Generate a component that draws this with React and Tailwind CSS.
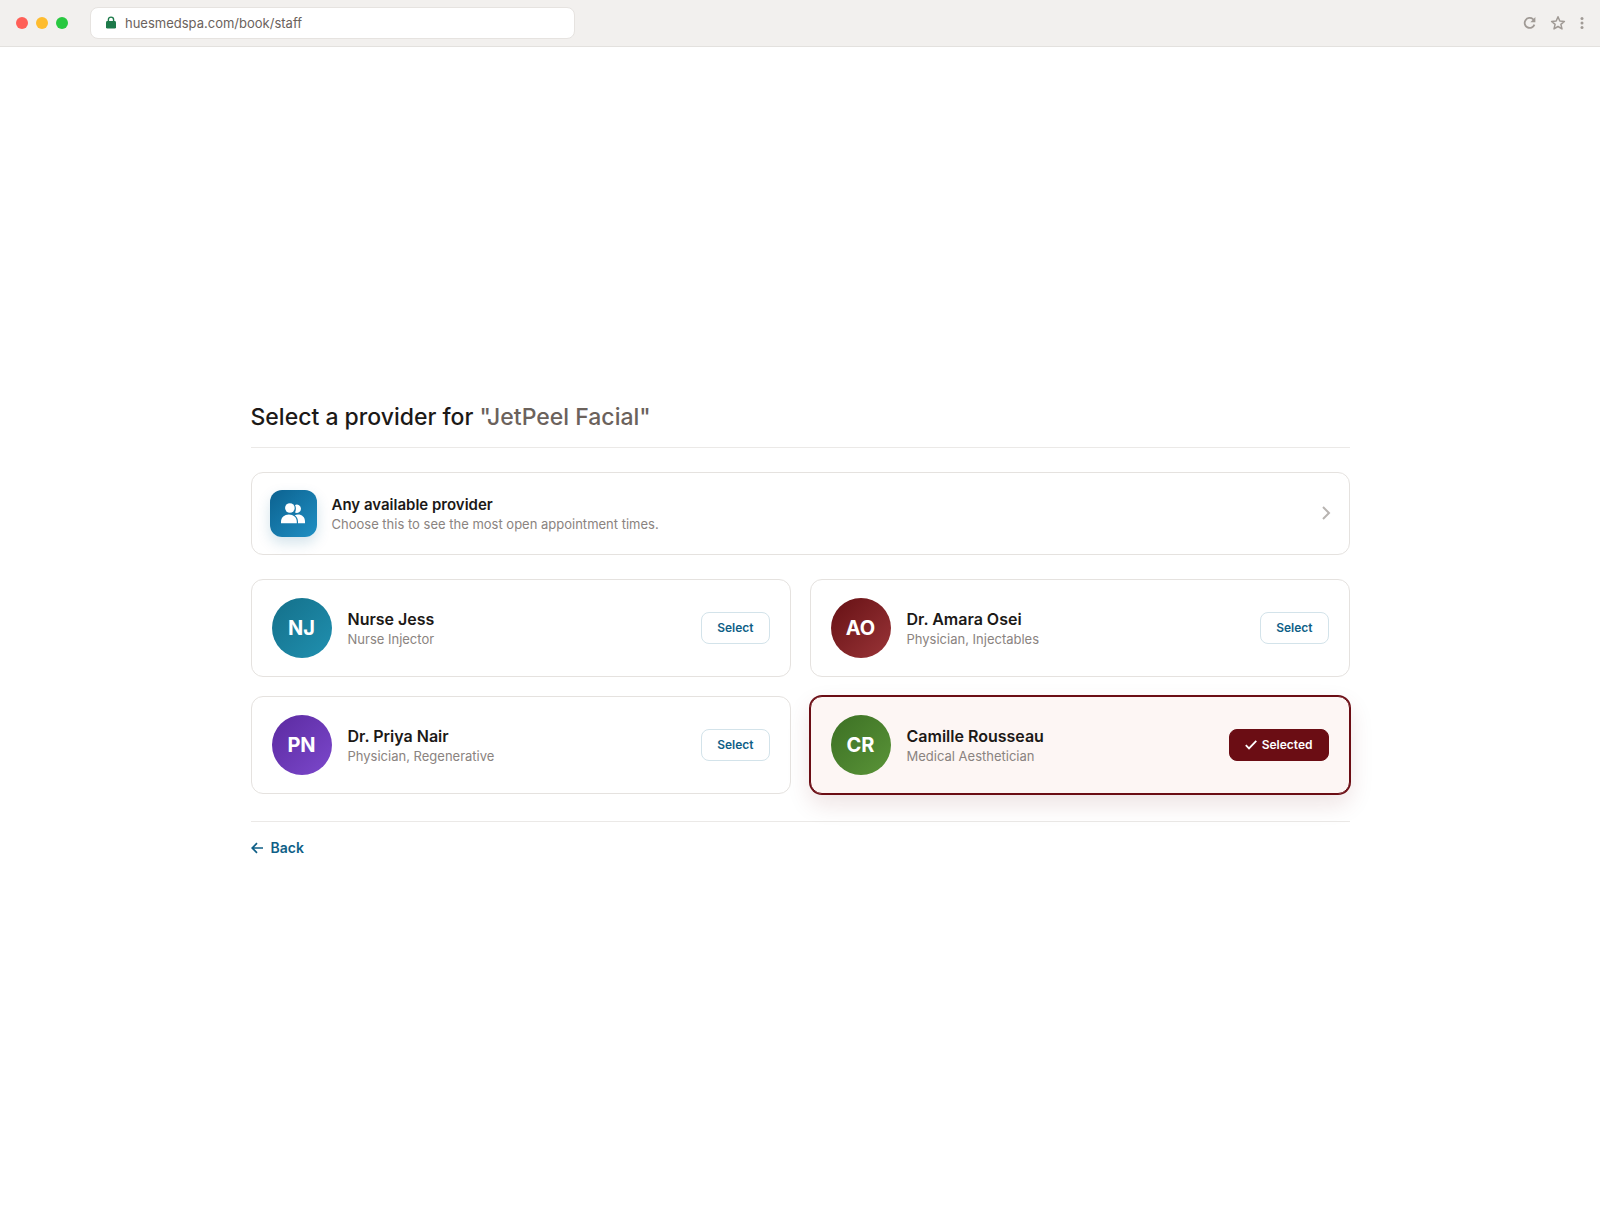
import { useState } from "react";

const providers = [
  { id: "nj", initials: "NJ", name: "Nurse Jess", role: "Nurse Injector", avatar: "from-[#14708a] to-[#2090b0]" },
  { id: "ao", initials: "AO", name: "Dr. Amara Osei", role: "Physician, Injectables", avatar: "from-[#661014] to-[#9a3438]" },
  { id: "pn", initials: "PN", name: "Dr. Priya Nair", role: "Physician, Regenerative", avatar: "from-[#5b2aa0] to-[#7c48cc]" },
  { id: "cr", initials: "CR", name: "Camille Rousseau", role: "Medical Aesthetician", avatar: "from-[#3c7024] to-[#5a9438]" },
];

const BrowserBar = () => (
  <header className="flex h-[47px] items-center justify-between border-b border-[#e3e1de] bg-[#f2f0ee] px-4">
    <div className="flex flex-1 items-center">
      <div className="flex gap-2">
        <span className="size-3 rounded-full bg-[#ff5f57]" />
        <span className="size-3 rounded-full bg-[#febc2e]" />
        <span className="size-3 rounded-full bg-[#28c840]" />
      </div>
      <label className="ml-[22px] flex h-8 w-full max-w-[485px] items-center gap-1.5 rounded-lg border border-[#e6e3e0] bg-white px-3">
        <svg viewBox="0 0 16 16" className="size-4 shrink-0" aria-hidden="true">
          <path d="M5.4 7V4.7a2.6 2.6 0 0 1 5.2 0V7" fill="none" stroke="#1d7a4a" strokeWidth="1.4" />
          <rect x="3" y="6" width="10" height="7.6" rx="1.4" fill="#1d7a4a" />
        </svg>
        <input
          type="text"
          aria-label="Address"
          defaultValue="huesmedspa.com/book/staff"
          className="w-full bg-transparent pt-px text-[13px] text-[#6b625c] outline-none"
        />
      </label>
    </div>
    <div className="flex items-center text-[#a09a95]">
      <button type="button" aria-label="Reload" className="mr-3">
        <svg viewBox="0 0 16 16" className="size-4" fill="none" stroke="currentColor" strokeWidth="1.8">
          <path d="M12.4 9.6A5 5 0 1 1 11 4.2L12.5 5.4" />
          <path d="M13.4 2v5.2H8.4z" fill="currentColor" stroke="none" />
        </svg>
      </button>
      <button type="button" aria-label="Bookmark" className="mr-3">
        <svg viewBox="0 0 16 16" className="size-4" fill="none" stroke="currentColor" strokeWidth="1.5" strokeLinejoin="round">
          <path d="M8 1.8 9.8 6l4.6.4-3.5 3 1.1 4.5L8 11.5 4 13.9l1.1-4.5-3.5-3L6.2 6z" />
        </svg>
      </button>
      <button type="button" aria-label="Menu" className="-mr-0.5">
        <svg viewBox="0 0 8 16" className="h-4 w-2" fill="currentColor">
          <circle cx="4" cy="3.5" r="1.5" />
          <circle cx="4" cy="8" r="1.5" />
          <circle cx="4" cy="12.5" r="1.5" />
        </svg>
      </button>
    </div>
  </header>
);

const ProviderCard = ({ provider, selected, onSelect }) => (
  <li
    className={`flex items-center rounded-xl border px-5 py-[18px] ${
      selected
        ? "border-[#6b0d14] bg-[#fdf6f4] shadow-[0_0_0_1px_#6b0d14,0_10px_24px_rgba(107,13,20,0.12)]"
        : "border-[#e5e2df] bg-white"
    }`}
  >
    <span
      className={`flex size-[60px] shrink-0 items-center justify-center rounded-full bg-linear-135 text-xl font-bold text-white ${provider.avatar}`}
    >
      {provider.initials}
    </span>
    <div className="ml-4 min-w-0 flex-1 pt-0.5">
      <h2 className="text-base leading-5 font-semibold text-[#1c1917]">{provider.name}</h2>
      <p className="text-[13px] leading-5 text-[#8a8380]">{provider.role}</p>
    </div>
    <button
      type="button"
      aria-pressed={selected}
      onClick={onSelect}
      className={`flex h-8 items-center rounded-lg border px-[15px] text-xs font-semibold ${
        selected ? "border-[#6b0d14] bg-[#6b0d14] text-white" : "border-[#d3e3ea] bg-white text-[#0f5f87]"
      }`}
    >
      {selected && (
        <svg viewBox="0 0 12 12" className="mr-[5px] size-3" fill="none" stroke="currentColor" strokeWidth="1.8" aria-hidden="true">
          <path d="M.8 6.2 4 9.4 11.300 1.900" />
        </svg>
      )}
      {selected ? "Selected" : "Select"}
    </button>
  </li>
);

export default function App() {
  const [selectedId, setSelectedId] = useState("cr");

  return (
    <div className="flex min-h-screen flex-col bg-white font-['Inter',sans-serif]">
      <BrowserBar />
      <main className="flex flex-1 items-center justify-center">
        <div className="w-full max-w-[1099px]">
          <h1 className="border-b border-[#ebe9e7] pb-4 text-[23px] leading-7 font-medium text-[#1c1917]">
            Select a provider for <span className="text-[#6b625c]">"JetPeel Facial"</span>
          </h1>

          <button
            type="button"
            className="mt-6 flex w-full items-center rounded-xl border border-[#e5e2df] bg-white px-[18px] py-[17px] text-left"
          >
            <span className="flex size-[47px] shrink-0 items-center justify-center rounded-xl bg-linear-135 from-[#0c6290] to-[#1f90c4] shadow-[0_6px_14px_rgba(12,98,144,0.18)]">
              <svg viewBox="0 0 24 24" className="size-6" fill="white" aria-hidden="true">
                <circle cx="8.9" cy="7" r="4.8" />
                <path d="M14 3.900a4.200 4.200 0 1 1 0 7.600c1.200-2.300 1.200-5.300 0-7.600z" />
                <path d="M0 22.3v-1.6c0-4.3 3.4-7.3 7.900-7.300s7.900 3 7.900 7.300v1.6z" />
                <path d="M13.8 14.2c1-.4 2-.6 3.200-.6 4 0 7 2.7 7 6.900v1.800h-7v-1.6c0-2.600-1.200-5-3.200-6.500z" />
              </svg>
            </span>
            <span className="ml-[15px] flex-1 pt-0.5">
              <span className="block text-[15px] leading-5 font-semibold text-[#1c1917]">Any available provider</span>
              <span className="block text-[13px] leading-[18px] text-[#8a8380]">
                Choose this to see the most open appointment times.
              </span>
            </span>
            <svg viewBox="0 0 10 16" className="h-4 w-2.5" fill="none" stroke="#b8b4b1" strokeWidth="2" aria-hidden="true">
              <path d="m2 2 6 6-6 6" />
            </svg>
          </button>

          <ul className="mt-6 grid grid-cols-2 gap-[19px]">
            {providers.map((provider) => (
              <ProviderCard
                key={provider.id}
                provider={provider}
                selected={provider.id === selectedId}
                onSelect={() => setSelectedId(provider.id)}
              />
            ))}
          </ul>

          <footer className="mt-[27px] border-t border-[#ebe9e7] pt-4">
            <a href="#back" className="flex w-fit items-center gap-2 text-sm leading-5 font-semibold text-[#0f5f87]">
              <svg viewBox="0 0 12 12" className="size-3" fill="none" stroke="currentColor" strokeWidth="1.7" aria-hidden="true">
                <path d="M12 6H1.5M6 1.2 1.2 6 6 10.8" />
              </svg>
              Back
            </a>
          </footer>
        </div>
      </main>
    </div>
  );
}
